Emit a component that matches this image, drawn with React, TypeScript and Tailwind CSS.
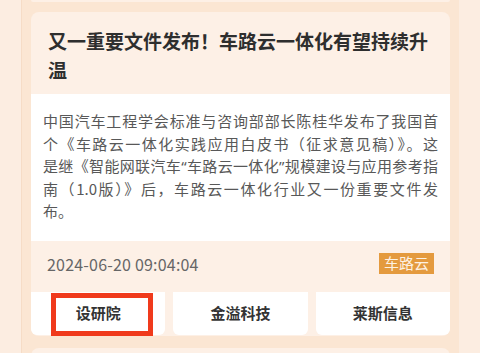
import React from 'react';

const Q = ({ children }: { children: React.ReactNode }) => (
  <span style={{ fontFamily: '"Noto Sans", "Liberation Sans", sans-serif' }}>{children}</span>
);

const bodyLines: React.ReactNode[] = [
  '中国汽车工程学会标准与咨询部部长陈桂华发布了我国首',
  '个《车路云一体化实践应用白皮书（征求意见稿）》。这',
  <>
    是继《智能网联汽车<Q>“</Q>车路云一体化<Q>”</Q>规模建设与应用参考指
  </>,
  '南（1.0版）》后，车路云一体化行业又一份重要文件发',
];

const companies = ['设研院', '金溢科技', '莱斯信息'];

const font = { fontFamily: '"Noto Sans CJK SC", "Noto Sans", sans-serif' };

const NewsCard = () => {
  return (
    <div className="relative rounded-lg bg-[#fdf0e6] pb-[1px]">
      {/* title */}
      <h2 className="px-[17px] pt-[14px] pb-[10px] text-[19px] leading-[29px] font-bold text-[#2e2e2e]">
        又一重要文件发布！车路云一体化有望持续升温
      </h2>

      {/* summary */}
      <div className="bg-white px-[12px] pt-[16px] pb-[18px] text-[15px] leading-[22.5px] text-[#585858]">
        {bodyLines.map((line, i) => (
          <p key={i} className="whitespace-nowrap text-justify [text-align-last:justify]">
            {line}
          </p>
        ))}
        <p>布。</p>
      </div>

      {/* meta */}
      <div className="flex h-[51px] items-center justify-between pl-4 pr-4">
        <span className="-mt-[4px] text-[16px] tracking-[0.2px] text-[#666666]">2024-06-20 09:04:04</span>
        <span className="-mt-[6px] flex h-[21px] items-center bg-[#e49a3e] px-[5px] text-[15px] text-[#fdf1e2]">
          车路云
        </span>
      </div>

      {/* related companies */}
      <div className="grid grid-cols-3 gap-2">
        {companies.map((name) => (
          <button
            key={name}
            className="flex h-[43px] items-center justify-center rounded-b-md bg-white text-[15px] font-bold text-[#333333]"
          >
            {name}
          </button>
        ))}
      </div>

      {/* highlight box */}
      <div className="pointer-events-none absolute bottom-0 left-[20px] h-[43px] w-[102px] border-[5px] border-[#f03a1c]" />
    </div>
  );
};

export default function App() {
  return (
    <div className="h-[353px] w-[480px] overflow-hidden bg-[#fcede1]" style={font}>
      <div className="ml-[21px] mr-[21px] h-full border-l border-[#f6dcc6] bg-[#fbe6d3] px-[9px]">
        <div className="h-[2px] rounded-b-lg bg-[#fdf0e6]" />
        <div className="mt-[10px]">
          <NewsCard />
        </div>
        <div className="mt-[12px] h-[20px] rounded-t-lg bg-[#fdf0e6]" />
      </div>
    </div>
  );
}
